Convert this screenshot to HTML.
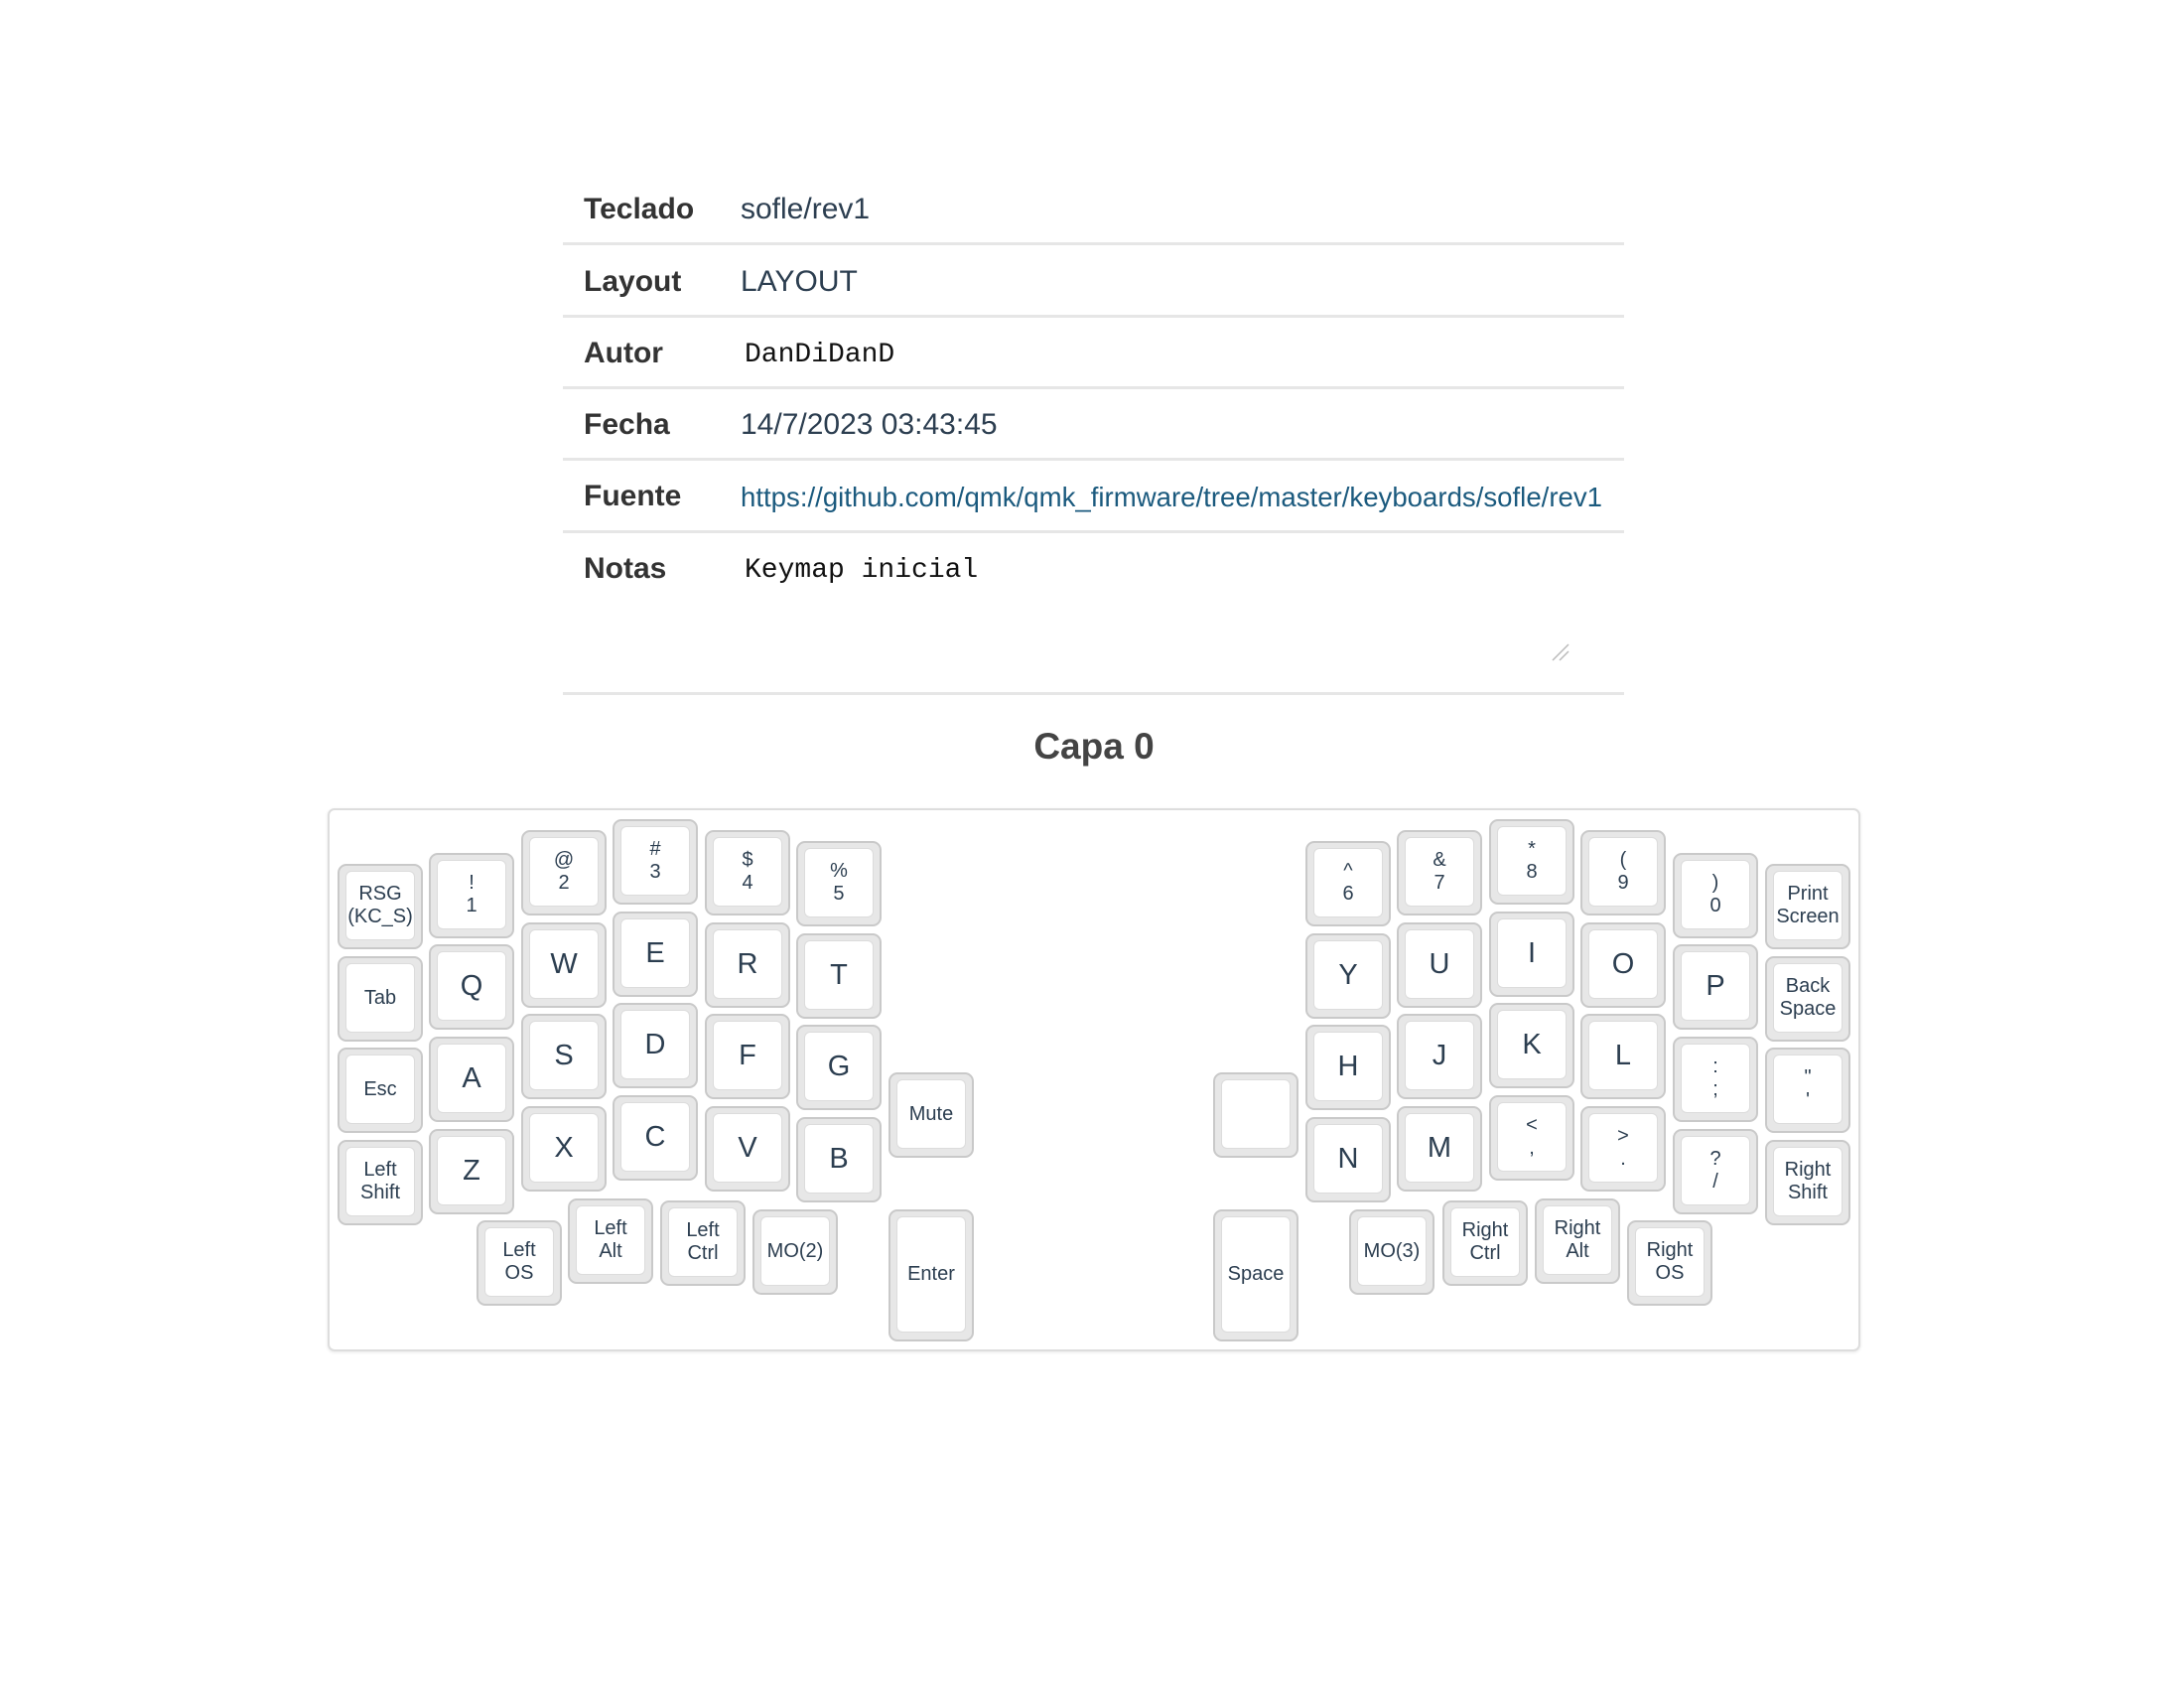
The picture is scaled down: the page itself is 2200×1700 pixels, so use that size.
<!DOCTYPE html>
<html><head><meta charset="utf-8"><style>
body{margin:0;width:2200px;height:1700px;background:#fff;position:relative;overflow:hidden;font-family:"Liberation Sans",sans-serif;}
.row{position:absolute;left:567px;width:1069px;border-bottom:3px solid #e6e6e6;box-sizing:border-box;}
.lab{position:absolute;left:21px;font-weight:bold;font-size:30px;color:#333;}
.val{position:absolute;left:179px;font-size:30px;color:#2c3e50;}
.mono{font-family:"Liberation Mono",monospace;font-size:28px;color:#111;left:183px;}
.kb{position:absolute;left:330px;top:814px;width:1544px;height:547px;border:2px solid #ddd;border-radius:7px;box-sizing:border-box;box-shadow:0 1px 3px rgba(0,0,0,.1);}
.k{position:absolute;width:86px;height:86px;box-sizing:border-box;border:2px solid #c9c9c9;border-radius:9px;background:#e7e7e7;}
.k.h{height:133px;}
.k i{font-style:normal;position:absolute;left:6px;right:6px;top:5px;bottom:7px;background:#fff;border:1px solid #dcdcdc;border-radius:6px;display:flex;align-items:center;justify-content:center;text-align:center;color:#2c3e50;font-size:20px;line-height:23px;}
.k i.b{font-size:29px;}
</style></head><body>
<div class="row" style="top:175px;height:72px"><span class="lab" style="top:19px">Teclado</span><span class="val" style="top:19px">sofle/rev1</span></div>
<div class="row" style="top:247px;height:73px"><span class="lab" style="top:20px">Layout</span><span class="val" style="top:20px">LAYOUT</span></div>
<div class="row" style="top:320px;height:72px"><span class="lab" style="top:19px">Autor</span><span class="val mono" style="top:22px">DanDiDanD</span></div>
<div class="row" style="top:392px;height:72px"><span class="lab" style="top:19px">Fecha</span><span class="val" style="top:19px">14/7/2023 03:43:45</span></div>
<div class="row" style="top:464px;height:73px"><span class="lab" style="top:19px">Fuente</span><span class="val" style="top:21px;font-size:27.6px;color:#1b5a7e">https://github.com/qmk/qmk_firmware/tree/master/keyboards/sofle/rev1</span></div>
<div class="row" style="top:537px;height:163px"><span class="lab" style="top:19px">Notas</span><span class="val mono" style="top:22px">Keymap inicial</span>
<svg style="position:absolute;left:995px;top:110px" width="20" height="20"><path d="M2 18L18 2M9 18L18 9" stroke="#bbb" stroke-width="1.5"/></svg></div>
<div style="position:absolute;left:0;width:2200px;top:731px;text-align:center;font-weight:bold;font-size:37px;color:#444;padding-left:2px">Capa 0</div>
<div class="kb"></div>

<div class="k" style="left:340px;top:870px"><i>RSG<br>(KC_S)</i></div>
<div class="k" style="left:340px;top:963px"><i>Tab</i></div>
<div class="k" style="left:340px;top:1055px"><i>Esc</i></div>
<div class="k" style="left:340px;top:1148px"><i>Left<br>Shift</i></div>
<div class="k" style="left:432px;top:859px"><i>!<br>1</i></div>
<div class="k" style="left:432px;top:951px"><i class="b">Q</i></div>
<div class="k" style="left:432px;top:1044px"><i class="b">A</i></div>
<div class="k" style="left:432px;top:1137px"><i class="b">Z</i></div>
<div class="k" style="left:525px;top:836px"><i>@<br>2</i></div>
<div class="k" style="left:525px;top:929px"><i class="b">W</i></div>
<div class="k" style="left:525px;top:1021px"><i class="b">S</i></div>
<div class="k" style="left:525px;top:1114px"><i class="b">X</i></div>
<div class="k" style="left:617px;top:825px"><i>#<br>3</i></div>
<div class="k" style="left:617px;top:918px"><i class="b">E</i></div>
<div class="k" style="left:617px;top:1010px"><i class="b">D</i></div>
<div class="k" style="left:617px;top:1103px"><i class="b">C</i></div>
<div class="k" style="left:710px;top:836px"><i>$<br>4</i></div>
<div class="k" style="left:710px;top:929px"><i class="b">R</i></div>
<div class="k" style="left:710px;top:1021px"><i class="b">F</i></div>
<div class="k" style="left:710px;top:1114px"><i class="b">V</i></div>
<div class="k" style="left:802px;top:847px"><i>%<br>5</i></div>
<div class="k" style="left:802px;top:940px"><i class="b">T</i></div>
<div class="k" style="left:802px;top:1032px"><i class="b">G</i></div>
<div class="k" style="left:802px;top:1125px"><i class="b">B</i></div>
<div class="k" style="left:895px;top:1080px"><i>Mute</i></div>
<div class="k h" style="left:895px;top:1218px"><i>Enter</i></div>
<div class="k" style="left:480px;top:1229px"><i>Left<br>OS</i></div>
<div class="k" style="left:572px;top:1207px"><i>Left<br>Alt</i></div>
<div class="k" style="left:665px;top:1209px"><i>Left<br>Ctrl</i></div>
<div class="k" style="left:758px;top:1218px"><i>MO(2)</i></div>

<div class="k" style="left:1222px;top:1080px"><i></i></div>
<div class="k h" style="left:1222px;top:1218px"><i>Space</i></div>
<div class="k" style="left:1315px;top:847px"><i>^<br>6</i></div>
<div class="k" style="left:1315px;top:940px"><i class="b">Y</i></div>
<div class="k" style="left:1315px;top:1032px"><i class="b">H</i></div>
<div class="k" style="left:1315px;top:1125px"><i class="b">N</i></div>
<div class="k" style="left:1407px;top:836px"><i>&amp;<br>7</i></div>
<div class="k" style="left:1407px;top:929px"><i class="b">U</i></div>
<div class="k" style="left:1407px;top:1021px"><i class="b">J</i></div>
<div class="k" style="left:1407px;top:1114px"><i class="b">M</i></div>
<div class="k" style="left:1500px;top:825px"><i>*<br>8</i></div>
<div class="k" style="left:1500px;top:918px"><i class="b">I</i></div>
<div class="k" style="left:1500px;top:1010px"><i class="b">K</i></div>
<div class="k" style="left:1500px;top:1103px"><i>&lt;<br>,</i></div>
<div class="k" style="left:1592px;top:836px"><i>(<br>9</i></div>
<div class="k" style="left:1592px;top:929px"><i class="b">O</i></div>
<div class="k" style="left:1592px;top:1021px"><i class="b">L</i></div>
<div class="k" style="left:1592px;top:1114px"><i>&gt;<br>.</i></div>
<div class="k" style="left:1685px;top:859px"><i>)<br>0</i></div>
<div class="k" style="left:1685px;top:951px"><i class="b">P</i></div>
<div class="k" style="left:1685px;top:1044px"><i>:<br>;</i></div>
<div class="k" style="left:1685px;top:1137px"><i>?<br>/</i></div>
<div class="k" style="left:1778px;top:870px"><i>Print<br>Screen</i></div>
<div class="k" style="left:1778px;top:963px"><i>Back<br>Space</i></div>
<div class="k" style="left:1778px;top:1055px"><i>"<br>'</i></div>
<div class="k" style="left:1778px;top:1148px"><i>Right<br>Shift</i></div>
<div class="k" style="left:1359px;top:1218px"><i>MO(3)</i></div>
<div class="k" style="left:1453px;top:1209px"><i>Right<br>Ctrl</i></div>
<div class="k" style="left:1546px;top:1207px"><i>Right<br>Alt</i></div>
<div class="k" style="left:1639px;top:1229px"><i>Right<br>OS</i></div>
</body></html>
